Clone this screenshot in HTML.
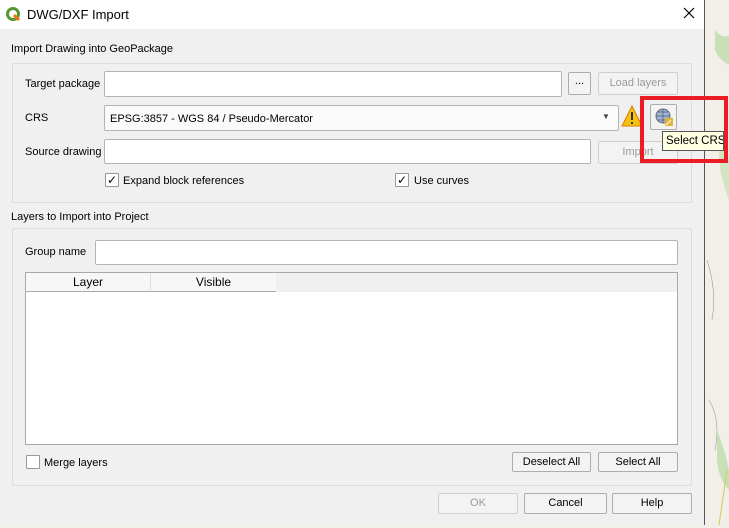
<!DOCTYPE html>
<html><head><meta charset="utf-8"><style>
*{box-sizing:border-box;margin:0;padding:0}
body{width:729px;height:525px;overflow:hidden;position:relative;background:#f2efe9;font-family:"Liberation Sans",sans-serif;font-size:11px;color:#000}
.a{position:absolute;white-space:nowrap}
.dlg{left:0;top:0;width:705px;height:525px;background:#f0f0f0;border-right:1px solid #555}
.title{left:0;top:0;width:704px;height:29px;background:#fff}
.grp{border:1px solid #dcdcdc;border-radius:2px}
.in{background:#fff;border:1px solid #b4b4b4;border-radius:2px}
.btn{background:#f3f3f3;border:1px solid #adadad;border-radius:2px;text-align:center;line-height:19px}
.dis{color:#9a9a9a;border-color:#cfcfcf}
.cb{width:14px;height:14px;background:#fff;border:1px solid #999;border-radius:1px;font-size:12px;line-height:12px;text-align:center}
</style></head><body>
<div class="a" style="left:705px;top:0;width:24px;height:525px;background:#f2efe9">
<svg width="24" height="525"><path d="M10 30 q8 10 14 5 v30 q-10 -5 -14 -15z" fill="#c9dfb8"/><path d="M14 130 q8 20 10 30 v40 q-8 -20 -10 -40z" fill="#d2e4c2"/><path d="M2 260 q10 30 5 60 M4 400 q12 20 6 50" stroke="#b58ab5" fill="none" stroke-width=".6"/><path d="M12 430 q8 20 12 40 v20 q-10 -10 -12 -30z" fill="#c7e0b6"/><path d="M22 470 l-8 55" stroke="#d4c95a"/></svg></div>
<div class="a dlg"></div>
<div class="a title"></div>
<svg class="a" style="left:5px;top:6px" width="16" height="16" viewBox="0 0 16 16"><circle cx="8" cy="8" r="5.5" fill="none" stroke="#589632" stroke-width="3"/><path d="M9 9 l5 5" stroke="#ee7913" stroke-width="3"/></svg>
<div class="a" style="left:27px;top:7px;font-size:13px">DWG/DXF Import</div>
<svg class="a" style="left:683px;top:7px" width="12" height="12"><path d="M1 1L11 11M11 1L1 11" stroke="#000" stroke-width="1.2"/></svg>

<div class="a" style="left:11px;top:43px">Import Drawing into GeoPackage</div>
<div class="a grp" style="left:12px;top:63px;width:680px;height:140px"></div>
<div class="a" style="left:25px;top:78px">Target package</div>
<div class="a in" style="left:104px;top:71px;width:458px;height:26px"></div>
<div class="a btn" style="left:568px;top:72px;width:23px;height:23px;line-height:17px">...</div>
<div class="a btn dis" style="left:598px;top:72px;width:80px;height:23px;line-height:21px">Load layers</div>
<div class="a" style="left:25px;top:112px">CRS</div>
<div class="a in" style="left:104px;top:105px;width:515px;height:26px;background:#fafafa"><span class="a" style="left:5px;top:7px">EPSG:3857 - WGS 84 / Pseudo-Mercator</span><span class="a" style="left:497px;top:6px;font-size:8px;color:#444">▼</span></div>
<svg class="a" style="left:621px;top:104px" width="22" height="24"><path d="M11 2 L21 22 H1Z" fill="#f5c211" stroke="#e07b00"/><rect x="10" y="8" width="2" height="8" fill="#333"/><rect x="10" y="18" width="2" height="2" fill="#333"/></svg>
<div class="a btn" style="left:650px;top:104px;width:27px;height:26px"></div>
<svg class="a" style="left:654px;top:107px" width="20" height="20"><circle cx="9" cy="9" r="7" fill="#9ab8d6" stroke="#667"/><path d="M2 9h14M9 2v14M4 5h10M4 13h10" stroke="#556" stroke-width=".7"/><rect x="11" y="11" width="8" height="8" fill="#e2b33c"/><path d="M12 18l5-5" stroke="#fff"/></svg>
<div class="a" style="left:25px;top:146px">Source drawing</div>
<div class="a in" style="left:104px;top:139px;width:487px;height:25px"></div>
<div class="a btn dis" style="left:598px;top:141px;width:80px;height:23px;line-height:21px">Import</div>
<div class="a cb" style="left:105px;top:173px">✓</div><div class="a" style="left:123px;top:175px">Expand block references</div>
<div class="a cb" style="left:395px;top:173px">✓</div><div class="a" style="left:414px;top:175px">Use curves</div>
<div class="a" style="left:640px;top:96px;width:88px;height:67px;border:4px solid #ec1c24"></div>
<div class="a" style="left:662px;top:131px;width:62px;height:20px;background:#ffffe1;border:1px solid #555;font-size:11.5px;line-height:18px;padding-left:3px;overflow:hidden">Select CRS</div>

<div class="a" style="left:11px;top:211px">Layers to Import into Project</div>
<div class="a grp" style="left:12px;top:228px;width:680px;height:258px"></div>
<div class="a" style="left:25px;top:246px">Group name</div>
<div class="a in" style="left:95px;top:240px;width:583px;height:25px"></div>
<div class="a" style="left:25px;top:272px;width:653px;height:173px;background:#fff;border:1px solid #a8a8a8"></div>
<div class="a" style="left:26px;top:273px;width:651px;height:19px;background:#f0f0f0"></div>
<div class="a" style="left:26px;top:273px;width:125px;height:19px;background:#f7f7f7;border-right:1px solid #ddd;border-bottom:1px solid #aaa;text-align:center;line-height:18px;font-size:12px">Layer</div>
<div class="a" style="left:151px;top:273px;width:125px;height:19px;background:#f7f7f7;border-bottom:1px solid #aaa;text-align:center;line-height:18px;font-size:12px">Visible</div>
<div class="a cb" style="left:26px;top:455px"></div><div class="a" style="left:44px;top:457px">Merge layers</div>
<div class="a btn" style="left:512px;top:452px;width:79px;height:20px;line-height:18px">Deselect All</div>
<div class="a btn" style="left:598px;top:452px;width:80px;height:20px;line-height:18px">Select All</div>
<div class="a btn dis" style="left:438px;top:493px;width:80px;height:21px">OK</div>
<div class="a btn" style="left:524px;top:493px;width:83px;height:21px">Cancel</div>
<div class="a btn" style="left:612px;top:493px;width:80px;height:21px">Help</div>
</body></html>
